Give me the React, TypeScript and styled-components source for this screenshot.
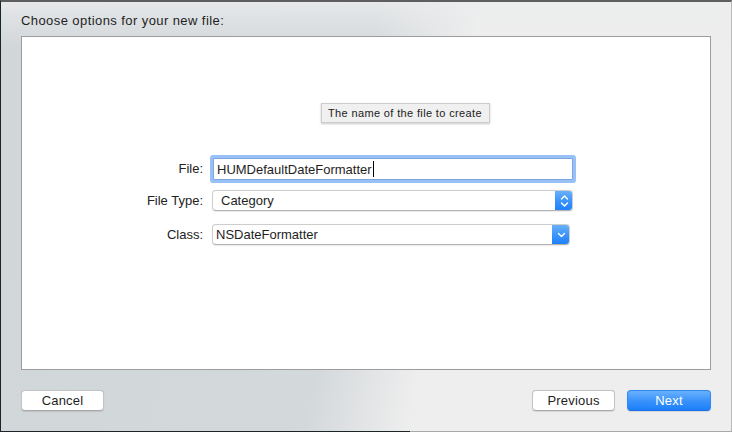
import React from 'react'
import styled, { createGlobalStyle } from 'styled-components'

const GlobalStyle = createGlobalStyle`
  html, body {
    margin: 0;
    padding: 0;
    overflow: hidden;
    background: #1b2528;
  }
  * {
    box-sizing: border-box;
  }
`

const font = `"Liberation Sans", Arial, Helvetica, sans-serif`

const Sheet = styled.div`
  width: 732px;
  height: 432px;
  display: flex;
  flex-direction: column;
  border-top: 2px solid #5e5e5e;
  border-left: 1px solid #18262a;
  border-right: 1px solid #b9b9b9;
  background:
    linear-gradient(to bottom, rgba(236, 237, 238, 0.75) 0px, rgba(236, 237, 238, 0) 46px),
    linear-gradient(100deg, #d1d6d9 0%, #d3d8db 47%, #e6e7e8 56%, #eeeeee 60%, #eeeeee 100%);
  font-family: ${font};
  color: #1e1e1e;
`

const Header = styled.div`
  height: 34px;
  padding: 11px 0 0 20px;
  font-size: 13px;
  line-height: 16px;
  letter-spacing: 0.42px;
`

const Panel = styled.div`
  position: relative;
  height: 334px;
  margin: 0 20px;
  background: #ffffff;
  border: 1px solid #9c9c9c;
  display: flex;
  flex-direction: column;
`

const Tooltip = styled.div`
  position: absolute;
  left: 299px;
  top: 66px;
  width: 169px;
  height: 20px;
  padding: 0 6px;
  display: flex;
  align-items: center;
  background: #f0f0f0;
  border: 1px solid #cdcdcd;
  box-shadow: 0 1px 2px rgba(0, 0, 0, 0.22);
  font-size: 11px;
  letter-spacing: 0.36px;
  white-space: nowrap;
  color: #222;
`

const Row = styled.div<{ $top: number; $height: number }>`
  display: grid;
  grid-template-columns: 181px auto;
  column-gap: 9px;
  align-items: center;
  height: ${p => p.$height}px;
  margin-top: ${p => p.$top}px;
`

const Label = styled.label`
  text-align: right;
  font-size: 13px;
  line-height: 16px;
  color: #222;
`

const TextField = styled.div`
  width: 360px;
  height: 22px;
  margin-left: 1px;
  display: flex;
  align-items: center;
  padding-left: 3px;
  background: #fff;
  border: 1px solid #7ea6dc;
  border-radius: 1px;
  box-shadow: 0 0 0 3px #97c1f7;
  font-size: 13px;
`

const Caret = styled.span`
  display: inline-block;
  width: 1px;
  height: 16px;
  background: #000;
  margin-left: 1px;
`

const Popup = styled.div<{ $width: number; $indent: number }>`
  width: ${p => p.$width}px;
  height: 21px;
  display: flex;
  align-items: stretch;
  background: #fff;
  border-radius: 4px;
  border: 1px solid #cdcdcd;
  border-bottom-color: #b3b3b3;
  box-shadow: 0 0.5px 1px rgba(0, 0, 0, 0.08);
  overflow: hidden;
  font-size: 13px;

  span {
    flex: 1;
    display: flex;
    align-items: center;
    padding-left: ${p => p.$indent}px;
  }
`

const Arrows = styled.div`
  width: 18px;
  margin: -1px -1px -1px 0;
  display: flex;
  align-items: center;
  justify-content: center;
  background: linear-gradient(to bottom, #6db4fb 0%, #3a92fb 55%, #1c7ff9 100%);
  border-radius: 0 4px 4px 0;
`

const Footer = styled.div`
  height: 61px;
  padding: 20px 20px 0 20px;
  display: flex;
  justify-content: space-between;
  align-items: flex-start;
`

const ButtonGroup = styled.div`
  display: flex;
  gap: 12px;
`

const Button = styled.button<{ $primary?: boolean; $width: number }>`
  width: ${p => p.$width}px;
  height: 21px;
  padding: 0;
  border-radius: 4px;
  font-family: ${font};
  font-size: 13px;
  line-height: 16px;
  letter-spacing: 0.2px;
  border: 1px solid ${p => (p.$primary ? '#2f86f6' : '#c3c3c3')};
  border-bottom-color: ${p => (p.$primary ? '#1a6ee8' : '#a9a9a9')};
  background: ${p =>
    p.$primary ? 'linear-gradient(to bottom, #69b1fc 0%, #3c93fb 50%, #1b7ff9 100%)' : '#ffffff'};
  color: ${p => (p.$primary ? '#ffffff' : '#1e1e1e')};
  box-shadow: 0 0.5px 1px rgba(0, 0, 0, 0.1);
`

const BottomEdge = styled.div`
  height: 1px;
  margin: 0 -1px;
  background: linear-gradient(to right, #1b2427 0px, #1b2427 410px, #a9a9a9 410px);
`

const Stepper = () => (
  <svg width="9" height="14" viewBox="0 0 9 14" fill="none">
    <path d="M1.5 5 L4.5 2 L7.5 5" stroke="#fff" strokeWidth="1.4" strokeLinecap="round" strokeLinejoin="round" />
    <path d="M1.5 9 L4.5 12 L7.5 9" stroke="#fff" strokeWidth="1.4" strokeLinecap="round" strokeLinejoin="round" />
  </svg>
)

const Chevron = () => (
  <svg width="9" height="6" viewBox="0 0 9 6" fill="none">
    <path d="M1.5 1.5 L4.5 4.5 L7.5 1.5" stroke="#fff" strokeWidth="1.4" strokeLinecap="round" strokeLinejoin="round" />
  </svg>
)

export default function App() {
  return (
    <>
      <GlobalStyle />
      <Sheet>
        <Header>Choose options for your new file:</Header>
        <Panel>
          <Tooltip>The name of the file to create</Tooltip>

          <Row $top={121} $height={22}>
            <Label>File:</Label>
            <TextField>
              HUMDefaultDateFormatter
              <Caret />
            </TextField>
          </Row>

          <Row $top={10} $height={21}>
            <Label>File Type:</Label>
            <Popup $width={361} $indent={8}>
              <span>Category</span>
              <Arrows>
                <Stepper />
              </Arrows>
            </Popup>
          </Row>

          <Row $top={13} $height={21}>
            <Label>Class:</Label>
            <Popup $width={358} $indent={3}>
              <span>NSDateFormatter</span>
              <Arrows>
                <Chevron />
              </Arrows>
            </Popup>
          </Row>
        </Panel>

        <Footer>
          <Button $width={83}>Cancel</Button>
          <ButtonGroup>
            <Button $width={83}>Previous</Button>
            <Button $width={84} $primary>
              Next
            </Button>
          </ButtonGroup>
        </Footer>
        <BottomEdge />
      </Sheet>
    </>
  )
}
